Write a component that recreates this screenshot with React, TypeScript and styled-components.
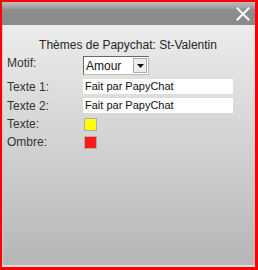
import React from "react";
import styled, { createGlobalStyle } from "styled-components";

const Global = createGlobalStyle`
  html, body { margin: 0; padding: 0; }
  body { font-family: "Liberation Sans", Arial, sans-serif; background: #fff; }
`;

const Frame = styled.div`
  width: 258px;
  height: 270px;
  box-sizing: border-box;
  border-style: solid;
  border-color: #f00;
  border-width: 2px 3px 3px 2px;
  display: flex;
  flex-direction: column;
  overflow: hidden;
`;

const TitleBar = styled.div`
  height: 23px;
  flex: none;
  background: linear-gradient(to bottom, #bdbdbd 0%, #a0a0a0 25%, #8d8d8d 35%, #8a8a8a 100%);
  display: flex;
  justify-content: flex-end;
  align-items: center;
  padding-right: 5px;
`;

const Close = styled.svg`
  width: 14px;
  height: 14px;
  display: block;
`;

const Body = styled.div`
  flex: 1;
  background: linear-gradient(to bottom, #ececec 0%, #d2d2d2 50%, #b6b6b6 100%);
  border-left: 1px solid #c8c8c8;
  border-bottom: 2px solid #dcdcdc;
  padding: 13px 0 0 4px;
  color: #222;
  font-size: 12px;
`;

const Title = styled.div`
  text-align: center;
  font-size: 12px;
  color: #262626;
  padding-right: 6px;
  margin-bottom: 4px;
`;

const Grid = styled.div`
  display: grid;
  grid-template-columns: 76px 150px;
  row-gap: 4px;
  align-items: center;
`;

const Label = styled.div<{ $top?: boolean }>`
  font-size: 12px;
  color: #333;
  align-self: ${(p) => (p.$top ? "start" : "center")};
  line-height: 14px;
`;

const Select = styled.div`
  width: 66px;
  height: 19px;
  box-sizing: border-box;
  background: #fff;
  border: 1px solid #666;
  border-right-color: #bbb;
  border-bottom-color: #bbb;
  display: flex;
  align-items: center;
  font-size: 12px;
  color: #111;
  padding-left: 2px;
`;

const SelectText = styled.span`
  flex: 1;
`;

const Arrow = styled.div`
  width: 14px;
  height: 15px;
  margin-right: 1px;
  background: #eee;
  border: 1px solid #aaa;
  box-sizing: border-box;
  display: flex;
  align-items: center;
  justify-content: center;
`;

const Input = styled.div`
  width: 150px;
  height: 15px;
  background: #fff;
  font-size: 11px;
  color: #111;
  line-height: 15px;
  padding-left: 2px;
  box-sizing: border-box;
`;

const Swatch = styled.div<{ $color: string }>`
  width: 13px;
  height: 13px;
  box-sizing: border-box;
  background: ${(p) => p.$color};
  border: 1px solid #b0b0a0;
  margin-left: 1px;
`;

export default function App() {
  return (
    <>
      <Global />
      <Frame>
        <TitleBar>
          <Close viewBox="0 0 14 14">
            <path d="M1.5 1.5 L12.5 12.5 M12.5 1.5 L1.5 12.5" stroke="#fff" strokeWidth="2" strokeLinecap="square" />
          </Close>
        </TitleBar>
        <Body>
          <Title>Thèmes de Papychat: St-Valentin</Title>
          <Grid>
            <Label $top>Motif:</Label>
            <Select>
              <SelectText>Amour</SelectText>
              <Arrow>
                <svg width="7" height="4" viewBox="0 0 7 4">
                  <path d="M0 0 H7 L3.5 4 Z" fill="#111" />
                </svg>
              </Arrow>
            </Select>
            <Label>Texte 1:</Label>
            <Input>Fait par PapyChat</Input>
            <Label>Texte 2:</Label>
            <Input>Fait par PapyChat</Input>
            <Label>Texte:</Label>
            <Swatch $color="#ffff00" />
            <Label>Ombre:</Label>
            <Swatch $color="#ff1a1a" />
          </Grid>
        </Body>
      </Frame>
    </>
  );
}
